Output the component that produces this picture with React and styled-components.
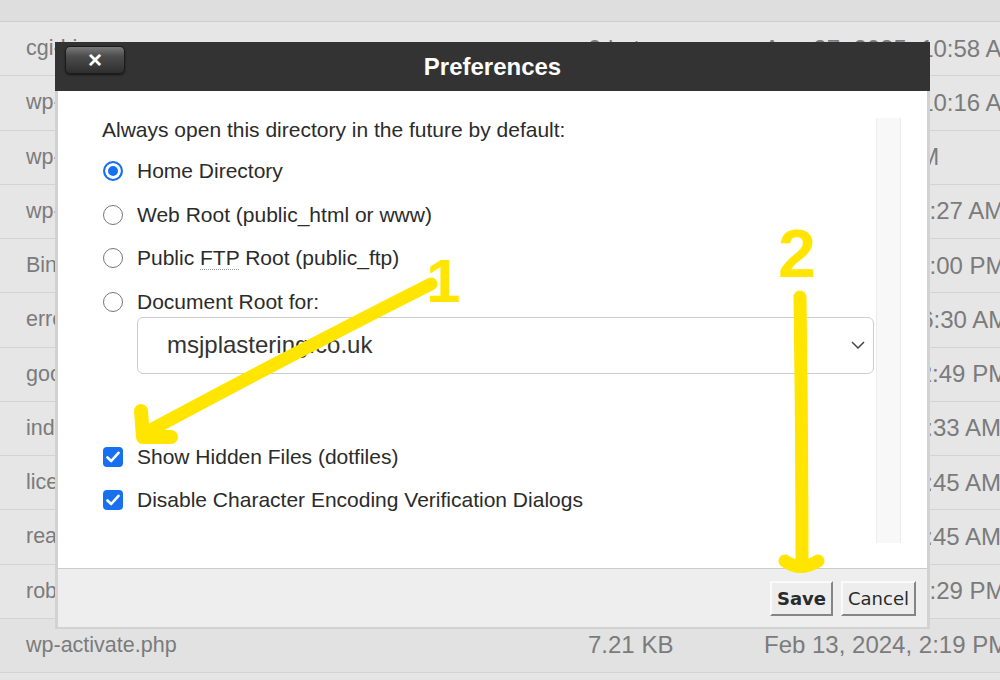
import React from "react";
import styled, { createGlobalStyle } from "styled-components";

const GlobalStyle = createGlobalStyle`
  html, body { margin: 0; padding: 0; }
  body { font-family: "Liberation Sans", Arial, sans-serif; background: #e5e5e5; }
`;

const Page = styled.div`
  position: relative;
  width: 1000px;
  height: 680px;
  overflow: hidden;
  background: #e5e5e5;
`;

const TableHead = styled.div`
  height: 21px;
  background: #dedede;
  border-bottom: 1px solid #cfcfcf;
`;

const Row = styled.div`
  display: grid;
  grid-template-columns: 562px 176px 1fr;
  align-items: center;
  height: 54.25px;
  box-sizing: border-box;
  padding-left: 26px;
  background: ${(p) => (p.$last ? "#e2e2e2" : "#e6e6e6")};
  border-bottom: 1px solid #d3d3d3;
  color: #7b7b7b;
  white-space: nowrap;
  overflow: hidden;
`;

const Name = styled.span`
  font-size: 21.5px;
`;

const Cell = styled.span`
  font-size: 24px;
`;

const Dialog = styled.div`
  position: absolute;
  left: 55px;
  top: 42px;
  width: 875px;
  box-sizing: border-box;
  background: #d2d2d2;
  padding: 0 3px 2px;
  z-index: 2;
`;

const TitleBar = styled.div`
  display: grid;
  grid-template-columns: 1fr auto 1fr;
  align-items: center;
  height: 49px;
  margin: 0 -3px;
  padding: 0 10px;
  background: #333333;
`;

const CloseButton = styled.button`
  justify-self: start;
  margin-top: -14px;
  width: 60px;
  height: 28px;
  border-radius: 5px;
  border: 1px solid #1c1c1c;
  background: linear-gradient(#7a7a7a 0%, #4d4d4d 35%, #2e2e2e 100%);
  box-shadow: 0 1px 2px rgba(0, 0, 0, 0.6);
  color: #fff;
  font-family: "Liberation Sans", Arial, sans-serif;
  font-weight: bold;
  font-size: 24px;
  line-height: 22px;
  padding: 0;
`;

const Title = styled.h2`
  margin: 0;
  color: #fff;
  font-size: 24px;
  font-weight: bold;
`;

const Body = styled.div`
  display: flex;
  gap: 2px;
  height: 477px;
  box-sizing: border-box;
  padding: 27px 26px 25px 44px;
  background: #fff;
`;

const Content = styled.div`
  flex: 1;
  display: flex;
  flex-direction: column;
  color: #2b2b2b;
  font-size: 21px;
`;

const Intro = styled.div`
  line-height: 24px;
`;

const OptionList = styled.div`
  display: flex;
  flex-direction: column;
  gap: ${(p) => p.$gap}px;
  margin-top: ${(p) => p.$top}px;
`;

const Option = styled.label`
  display: flex;
  align-items: center;
  gap: 14px;
  height: 24px;
  padding-left: 1px;
`;

const Radio = styled.span`
  width: 20px;
  height: 20px;
  box-sizing: border-box;
  border-radius: 50%;
  flex: none;
  border: ${(p) => (p.$on ? "2px solid #1670f0" : "1.5px solid #777")};
  background: ${(p) => (p.$on ? "#1670f0" : "#fff")};
  box-shadow: ${(p) => (p.$on ? "inset 0 0 0 3px #fff" : "none")};
`;

const Check = styled.span`
  width: 20px;
  height: 20px;
  border-radius: 4px;
  background: #1670f0;
  flex: none;
  display: flex;
  align-items: center;
  justify-content: center;
`;

const Abbr = styled.abbr`
  text-decoration: none;
  border-bottom: 1.5px dotted #999;
`;

const Select = styled.div`
  display: flex;
  align-items: center;
  justify-content: space-between;
  margin: 3px 0 0 35px;
  height: 57px;
  box-sizing: border-box;
  padding: 0 8px 0 29px;
  border: 1.5px solid #cdcdcd;
  border-radius: 6px;
  font-size: 24px;
  color: #333;
`;

const Track = styled.div`
  width: 25px;
  box-sizing: border-box;
  background: #f8f8f8;
  border-left: 1px solid #ececec;
  border-right: 1px solid #ececec;
`;

const Footer = styled.div`
  display: flex;
  justify-content: flex-end;
  align-items: flex-start;
  gap: 8px;
  height: 59px;
  box-sizing: border-box;
  padding: 12px 11px 0 0;
  background: #eeeeee;
  border-top: 1px solid #cacaca;
`;

const Button = styled.button`
  height: 35px;
  padding: 0 5px;
  background: #ededed;
  border: 2px solid;
  border-color: #fafafa #858585 #858585 #fafafa;
  font-family: "DejaVu Sans", Verdana, sans-serif;
  font-size: 18px;
  font-weight: ${(p) => (p.$primary ? "bold" : "normal")};
  color: #2a2a2a;
`;

const Overlay = styled.svg`
  position: absolute;
  inset: 0;
  z-index: 3;
  pointer-events: none;
`;

const rows = [
  ["cgi-bin", "0 bytes", "Aug 27, 2025, 10:58 AM"],
  ["wp-admin", "4 KB", "Aug 27, 2025, 10:16 AM"],
  ["wp-content", "4 KB", "Today, 11:41 AM"],
  ["wp-includes", "12 KB", "Jan 12, 2025, 9:27 AM"],
  ["BingSiteAuth.xml", "85 bytes", "Jun 18, 2024, 4:00 PM"],
  ["error_log", "1.2 MB", "Aug 27, 2025, 6:30 AM"],
  ["google5c1a2f.html", "53 bytes", "Mar 3, 2024, 12:49 PM"],
  ["index.php", "405 bytes", "Apr 4, 2024, 11:33 AM"],
  ["license.txt", "19.45 KB", "Apr 4, 2024, 11:45 AM"],
  ["readme.html", "7.23 KB", "Apr 4, 2024, 11:45 AM"],
  ["robots.txt", "67 bytes", "Jun 6, 2024, 12:29 PM"],
  ["wp-activate.php", "7.21 KB", "Feb 13, 2024, 2:19 PM"],
];

const Tick = () => (
  <svg width="14" height="12" viewBox="0 0 14 12">
    <path d="M1.5 6.5 L5.2 10 L12.5 1.8" fill="none" stroke="#fff" strokeWidth="2.6" strokeLinecap="round" strokeLinejoin="round" />
  </svg>
);

const Chevron = () => (
  <svg width="14" height="8" viewBox="0 0 14 8">
    <path d="M1 1 L7 7 L13 1" fill="none" stroke="#444" strokeWidth="1.5" />
  </svg>
);

export default function App() {
  return (
    <Page>
      <GlobalStyle />
      <TableHead />
      {rows.map(([name, size, date], i) => (
        <Row key={name} $last={i === rows.length - 1}>
          <Name>{name}</Name>
          <Cell>{size}</Cell>
          <Cell>{date}</Cell>
        </Row>
      ))}

      <Dialog>
        <TitleBar>
          <CloseButton>×</CloseButton>
          <Title>Preferences</Title>
        </TitleBar>
        <Body>
          <Content>
            <Intro>Always open this directory in the future by default:</Intro>
            <OptionList $gap={19.6} $top={17}>
              <Option><Radio $on /><span>Home Directory</span></Option>
              <Option><Radio /><span>Web Root (public_html or www)</span></Option>
              <Option><Radio /><span>Public <Abbr title="File Transfer Protocol">FTP</Abbr> Root (public_ftp)</span></Option>
              <Option><Radio /><span>Document Root for:</span></Option>
            </OptionList>
            <Select>
              msjplastering.co.uk
              <Chevron />
            </Select>
            <OptionList $gap={19} $top={71}>
              <Option><Check><Tick /></Check><span>Show Hidden Files (dotfiles)</span></Option>
              <Option><Check><Tick /></Check><span>Disable Character Encoding Verification Dialogs</span></Option>
            </OptionList>
          </Content>
          <Track />
        </Body>
        <Footer>
          <Button $primary>Save</Button>
          <Button>Cancel</Button>
        </Footer>
      </Dialog>

      <Overlay width="1000" height="680" viewBox="0 0 1000 680">
        <g stroke="#ffe500" strokeLinecap="round" strokeLinejoin="round" fill="none">
          <path d="M431 284 Q300 350 147 432" strokeWidth="13" />
          <path d="M141 411 L143 437 L171 437" strokeWidth="14" />
          <path d="M800 297 Q802 430 802 566" strokeWidth="13" />
          <path d="M785 561 Q800 572 818 561" strokeWidth="13" />
        </g>
        <text x="426" y="302" fill="#ffe500" fontFamily="Liberation Sans, Arial, sans-serif" fontWeight="bold" fontSize="62">1</text>
        <text x="778" y="277" fill="#ffe500" fontFamily="Liberation Sans, Arial, sans-serif" fontWeight="bold" fontSize="68">2</text>
      </Overlay>
    </Page>
  );
}
